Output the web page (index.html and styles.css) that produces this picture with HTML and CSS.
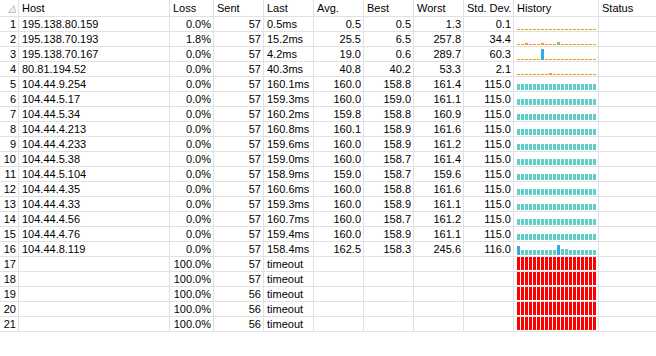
FILE: index.html
```html
<!DOCTYPE html>
<html lang="en">
<head>
    <meta charset="UTF-8">
    <title>Trace</title>
    <link rel="stylesheet" href="styles.css">
</head>
<body>
    <div class="list" id="list">
        <div class="row head">
            <div class="cell num">
                <svg class="sort" width="8" height="8" viewBox="0 0 8 8">
                    <polygon points="0.5,7.5 7.5,7.5 6,0.5" fill="#f4f4f4" stroke="#bdbdbd" stroke-width="1"/>
                </svg>
            </div>
            <div class="cell">Host</div>
            <div class="cell">Loss</div>
            <div class="cell">Sent</div>
            <div class="cell">Last</div>
            <div class="cell">Avg.</div>
            <div class="cell">Best</div>
            <div class="cell">Worst</div>
            <div class="cell">Std. Dev.</div>
            <div class="cell">History</div>
            <div class="cell last-col">Status</div>
        </div>
    </div>

    <script>
        // host, loss, sent, last, avg, best, worst, stdev, history
        const idle = (marks) => ({ dash: true, color: 'none', height: 0, marks: marks || {} });
        const ok = (marks, h) => ({ color: 'cyan', height: h || 6, marks: marks || {} });
        const lost = { color: 'red', height: 13, marks: {} };

        const hops = [
            ['195.138.80.159', '0.0%', 57, '0.5ms', '0.5', '0.5', '1.3', '0.1', idle()],
            ['195.138.70.193', '1.8%', 57, '15.2ms', '25.5', '6.5', '257.8', '34.4', idle({ 2: ['orange', 2], 6: ['orange', 2], 10: ['green', 3] })],
            ['195.138.70.167', '0.0%', 57, '4.2ms', '19.0', '0.6', '289.7', '60.3', idle({ 6: ['blue', 11] })],
            ['80.81.194.52', '0.0%', 57, '40.3ms', '40.8', '40.2', '53.3', '2.1', idle({ 8: ['orange', 2] })],
            ['104.44.9.254', '0.0%', 57, '160.1ms', '160.0', '158.8', '161.4', '115.0', ok()],
            ['104.44.5.17', '0.0%', 57, '159.3ms', '160.0', '159.0', '161.1', '115.0', ok()],
            ['104.44.5.34', '0.0%', 57, '160.2ms', '159.8', '158.8', '160.9', '115.0', ok()],
            ['104.44.4.213', '0.0%', 57, '160.8ms', '160.1', '158.9', '161.6', '115.0', ok()],
            ['104.44.4.233', '0.0%', 57, '159.6ms', '160.0', '158.9', '161.2', '115.0', ok()],
            ['104.44.5.38', '0.0%', 57, '159.0ms', '160.0', '158.7', '161.4', '115.0', ok()],
            ['104.44.5.104', '0.0%', 57, '158.9ms', '159.0', '158.7', '159.6', '115.0', ok()],
            ['104.44.4.35', '0.0%', 57, '160.6ms', '160.0', '158.8', '161.6', '115.0', ok()],
            ['104.44.4.33', '0.0%', 57, '159.3ms', '160.0', '158.9', '161.1', '115.0', ok()],
            ['104.44.4.56', '0.0%', 57, '160.7ms', '160.0', '158.7', '161.2', '115.0', ok()],
            ['104.44.4.76', '0.0%', 57, '159.4ms', '160.0', '158.9', '161.1', '115.0', ok()],
            ['104.44.8.119', '0.0%', 57, '158.4ms', '162.5', '158.3', '245.6', '116.0', ok({ 0: ['blue', 9], 10: ['blue', 10], 11: ['cyan', 6], 12: ['cyan', 6] }, 5)],
            ['', '100.0%', 57, 'timeout', '', '', '', '', lost],
            ['', '100.0%', 57, 'timeout', '', '', '', '', lost],
            ['', '100.0%', 56, 'timeout', '', '', '', '', lost],
            ['', '100.0%', 56, 'timeout', '', '', '', '', lost],
            ['', '100.0%', 56, 'timeout', '', '', '', '', lost]
        ];

        const aligns = ['left', 'right', 'right', 'left', 'right', 'right', 'right', 'right'];

        function addCell(row, text, cls) {
            const cell = document.createElement('div');
            cell.className = 'cell ' + cls;
            cell.textContent = text;
            row.appendChild(cell);
            return cell;
        }

        function drawHistory(cell, h) {
            if (h.dash) cell.classList.add('dashed');
            for (let i = 0; i < 20; i++) {
                const spec = h.marks[i] || [h.color, h.height];
                const bar = document.createElement('span');
                bar.className = 'bar ' + spec[0];
                bar.style.height = spec[1] + 'px';
                cell.appendChild(bar);
            }
        }

        const list = document.getElementById('list');
        hops.forEach((hop, n) => {
            const row = document.createElement('div');
            row.className = 'row';
            addCell(row, n + 1, 'num');
            for (let i = 0; i < 8; i++) {
                addCell(row, hop[i], aligns[i]);
            }
            drawHistory(addCell(row, '', 'history'), hop[8]);
            addCell(row, '', 'last-col');
            list.appendChild(row);
        });
    </script>
</body>
</html>
```

FILE: styles.css
```css
* {
    margin: 0;
    padding: 0;
    box-sizing: border-box;
}

body {
    font-family: 'Liberation Sans', Arial, sans-serif;
    font-size: 11px;
    color: #000;
    background: #fff;
    width: 656px;
    height: 356px;
    overflow: hidden;
}

.list {
    width: 656px;
}

.row {
    display: grid;
    grid-template-columns: 19px 151px 44px 50px 50px 50px 50px 50px 50px 85px 1fr;
    height: 15px;
    border-bottom: 1px solid #e1e1e1;
}

.row.head {
    height: 17px;
}

.cell {
    border-right: 1px solid #e1e1e1;
    line-height: 14px;
    padding: 0 3px;
    white-space: nowrap;
    overflow: hidden;
}

.head .cell {
    line-height: 16px;
}

.cell.last-col {
    border-right: none;
}

.num {
    text-align: right;
    padding: 0 2px 0 0;
}

.right {
    text-align: right;
    padding: 0 2px 0 0;
}

.head .num {
    display: flex;
    justify-content: flex-end;
    align-items: flex-start;
    padding: 5px 2px 0 0;
}

.sort {
    display: block;
}

.history {
    display: flex;
    align-items: flex-end;
    gap: 1px;
    padding: 0 0 1px 3px;
}

.history.dashed {
    background-image: repeating-linear-gradient(to right, #f59b0c 0 3px, transparent 3px 4px);
    background-size: 79px 1px;
    background-position: 3px calc(100% - 1px);
    background-repeat: no-repeat;
}

.bar {
    flex: none;
    width: 3px;
}

.cyan { background: #5fcfc9; }
.blue { background: #38a9e2; }
.red { background: #ff0000; }
.orange { background: #f59b0c; }
.green { background: #8dc07a; }
```
